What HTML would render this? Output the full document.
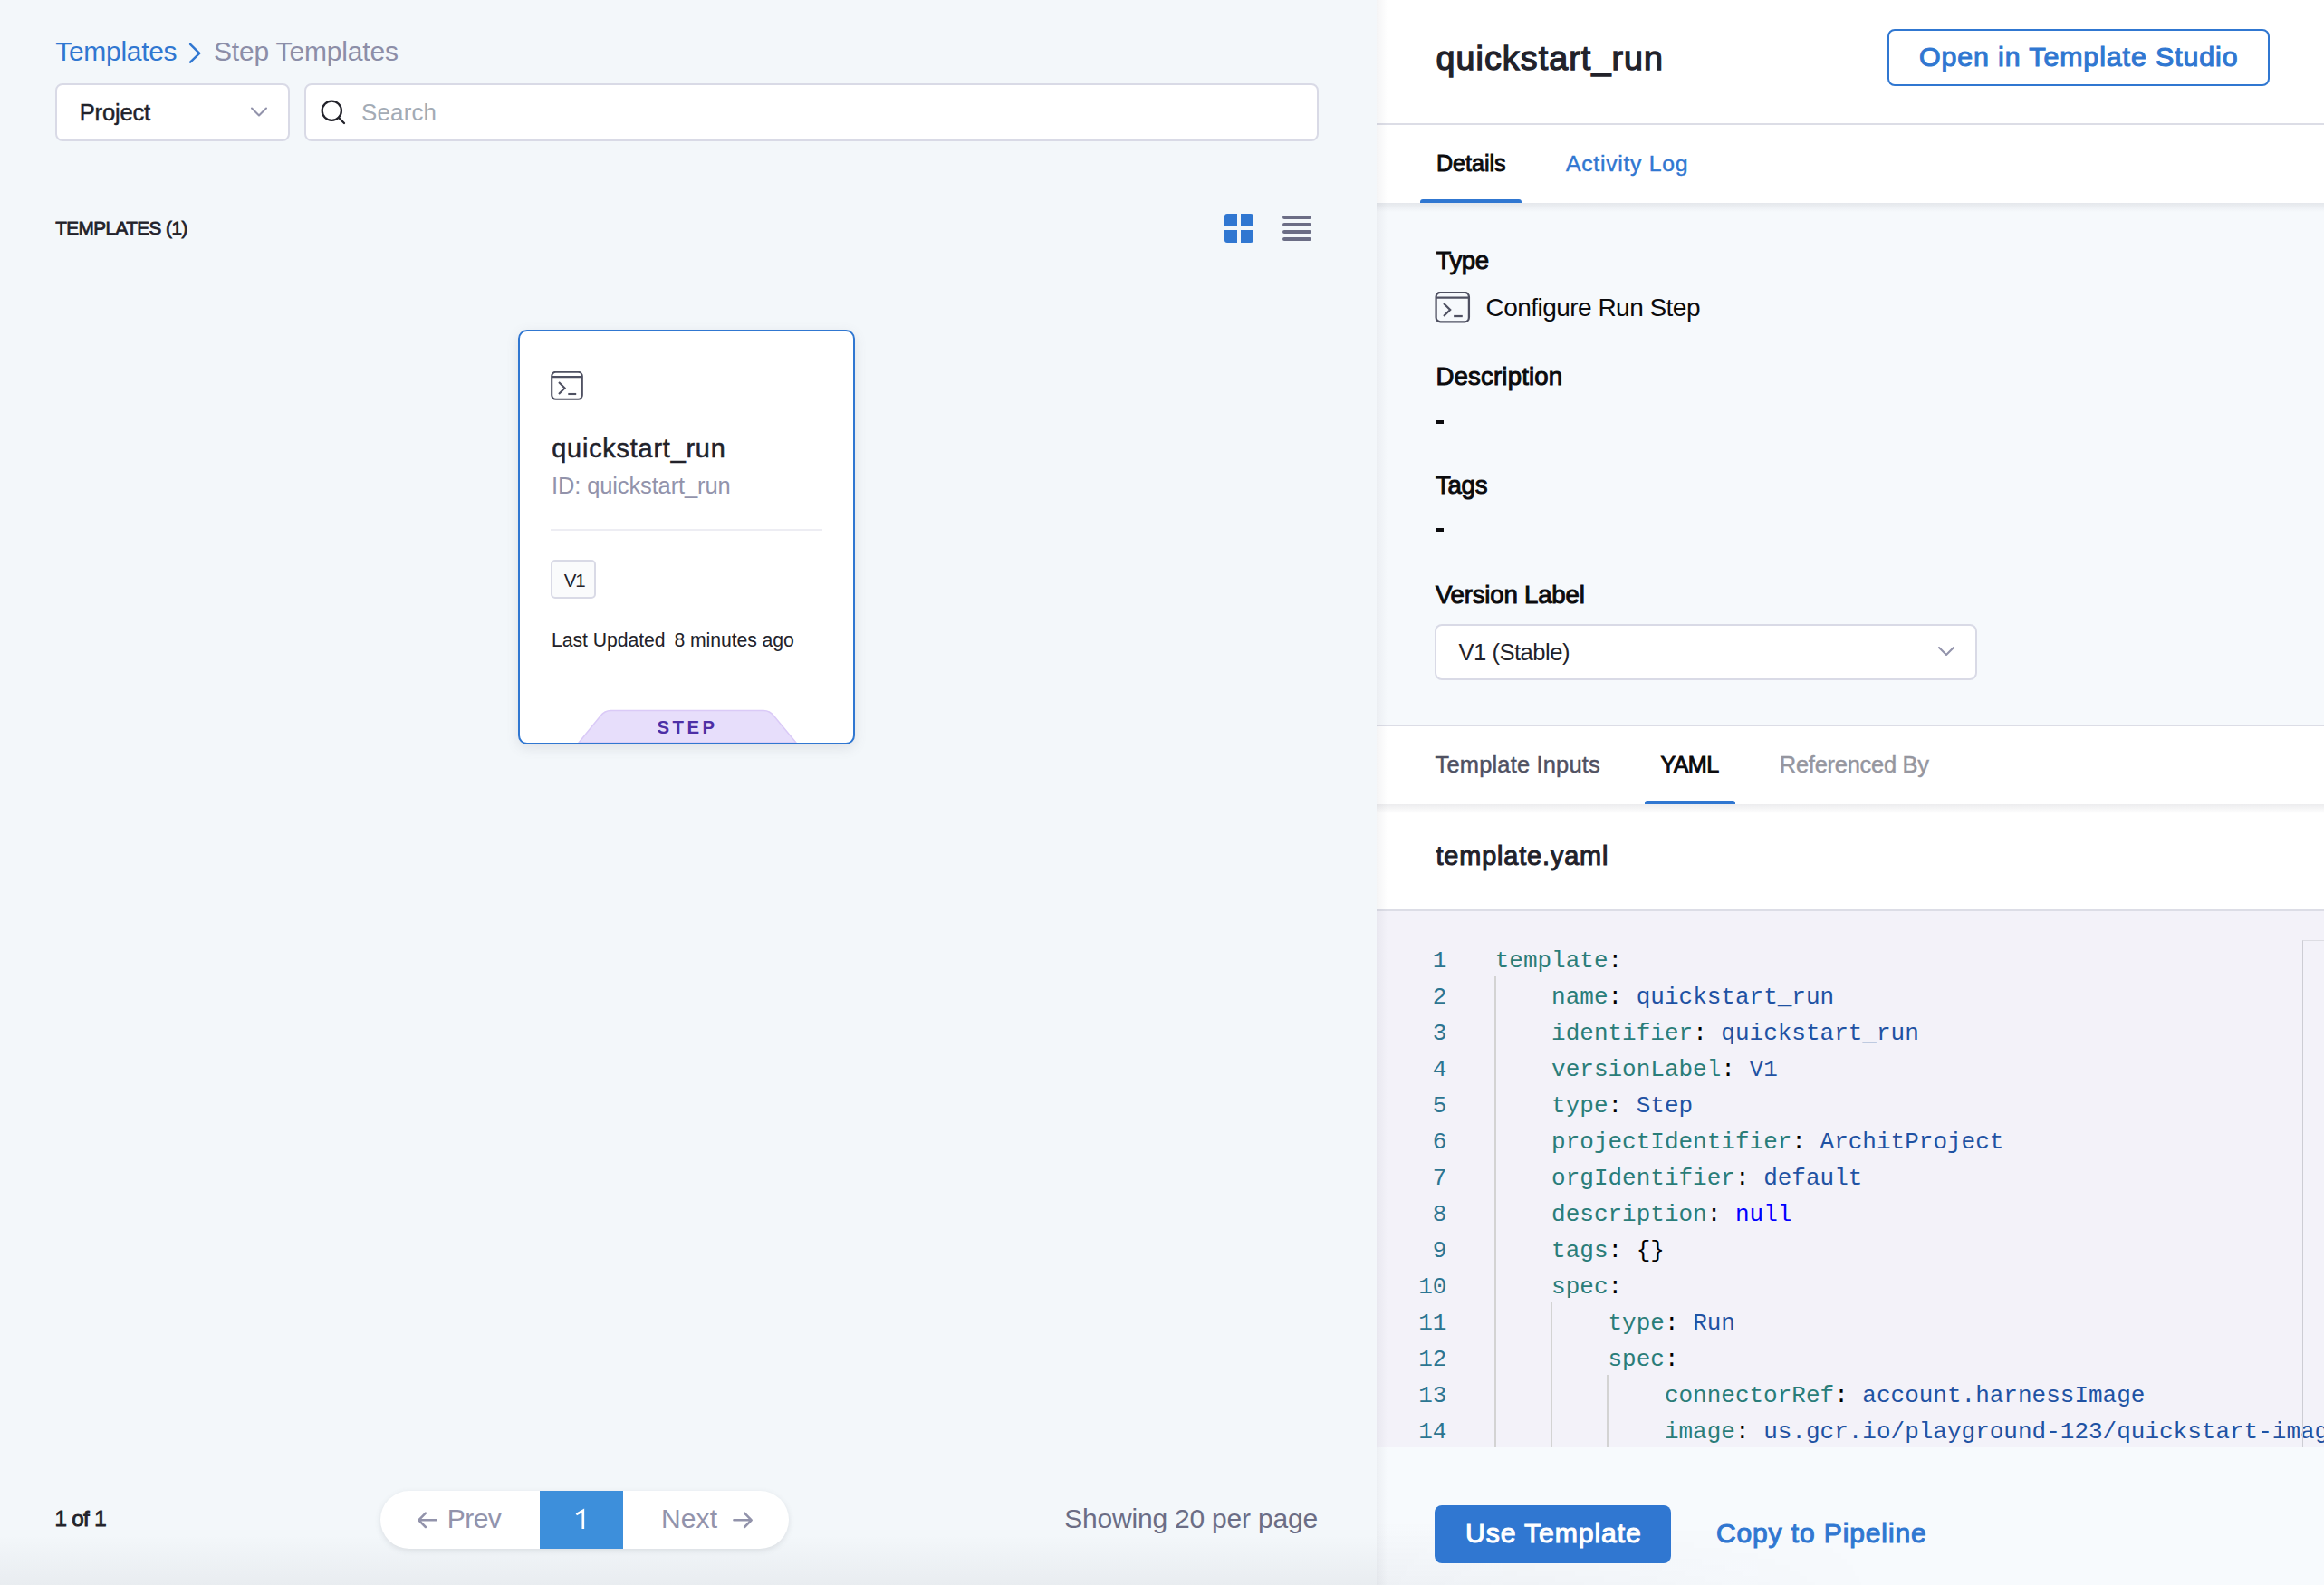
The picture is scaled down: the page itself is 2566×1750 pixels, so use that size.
<!DOCTYPE html>
<html><head><meta charset="utf-8"><style>
html,body{margin:0;padding:0;}
body{width:2566px;height:1750px;position:relative;overflow:hidden;background:#f3f7fa;font-family:"Liberation Sans",sans-serif;}
.a{position:absolute;}
.t{position:absolute;line-height:1;white-space:nowrap;}
.box{background:#fff;border:2px solid #d9dae6;border-radius:8px;box-sizing:border-box;}
.card{background:#fff;border:2px solid #3077d1;border-radius:10px;box-sizing:border-box;box-shadow:0 4px 14px rgba(96,97,112,0.14);}
.ln{position:absolute;left:0;width:77.4px;text-align:right;font-family:"Liberation Mono",monospace;font-size:26px;line-height:1;color:#2c7591;}
.cl{position:absolute;white-space:pre;font-family:"Liberation Mono",monospace;font-size:26px;line-height:1;}
.k{color:#2a7d79} .p{color:#000} .s{color:#1f52a3} .n{color:#0000ff} .b{color:#000}
</style></head><body>
<div class="a" style="left:0;top:1695px;width:1520px;height:55px;background:linear-gradient(rgba(40,41,61,0),rgba(40,41,61,0.05))"></div><div class="t" style="left:61.2px;top:42.3px;font-size:30.01px;color:#3077d1;letter-spacing:-0.29px;">Templates</div><svg class="a" style="left:205px;top:44px" width="22" height="30" viewBox="0 0 22 30"><path d="M5.1 4.9 L15.2 14.8 L5.1 24.6" fill="none" stroke="#3077d1" stroke-width="2.5" stroke-linecap="round" stroke-linejoin="round"/></svg><div class="t" style="left:236.0px;top:42.3px;font-size:30.01px;color:#8c8ea8;letter-spacing:-0.18px;">Step Templates</div><div class="a box" style="left:61px;top:92px;width:258.5px;height:64px;"></div><div class="t" style="left:87.7px;top:112.1px;font-size:25.58px;-webkit-text-stroke:0.46px #22222a;color:#22222a;letter-spacing:-0.18px;">Project</div><svg class="a" style="left:274px;top:114px" width="24" height="18" viewBox="0 0 24 18"><path d="M4 5.5 L12 13.5 L20 5.5" fill="none" stroke="#9293ab" stroke-width="2.1" stroke-linecap="round" stroke-linejoin="round"/></svg><div class="a box" style="left:336px;top:92px;width:1119.5px;height:64px;"></div><svg class="a" style="left:350px;top:106px" width="36" height="36" viewBox="0 0 36 36"><circle cx="16.3" cy="16.2" r="10.6" fill="none" stroke="#22222a" stroke-width="2.3"/><path d="M23.8 23.8 L30 30" stroke="#22222a" stroke-width="2.3" stroke-linecap="round"/></svg><div class="t" style="left:399.0px;top:111.5px;font-size:25.87px;color:#a3abb5;letter-spacing:0.21px;">Search</div><div class="t" style="left:61.2px;top:242.4px;font-size:20.71px;-webkit-text-stroke:0.77px #22222a;color:#22222a;letter-spacing:-0.54px;">TEMPLATES (1)</div><svg class="a" style="left:1352px;top:236px" width="32" height="32" viewBox="0 0 32 32" fill="#3077d1">
<path d="M3 0 H14 V14 H0 V3 A3 3 0 0 1 3 0Z"/><path d="M18 0 H29 A3 3 0 0 1 32 3 V14 H18Z"/>
<path d="M0 18 H14 V32 H3 A3 3 0 0 1 0 29Z"/><path d="M18 18 H32 V29 A3 3 0 0 1 29 32 H18Z"/></svg><svg class="a" style="left:1414px;top:234px" width="36" height="36" viewBox="0 0 36 36" stroke="#6b6d85" stroke-width="4" stroke-linecap="round">
<path d="M4 6 H32"/><path d="M4 14 H32"/><path d="M4 22 H32"/><path d="M4 30 H32"/></svg><div class="a card" style="left:572px;top:364px;width:372px;height:458px;"></div><svg class="a" style="left:608px;top:410px" width="36" height="32" viewBox="0 0 36 32"><rect x="1.2" y="0.8" width="33.6" height="30" rx="4.5" fill="none" stroke="#4f5162" stroke-width="2.1"/><path d="M1.5 6.1 H34.5" stroke="#4f5162" stroke-width="2.1"/><path d="M9 12 L15.6 18.5 L9 25" fill="none" stroke="#4f5162" stroke-width="2.1" stroke-linejoin="miter"/><path d="M19.3 25 H28.2" stroke="#4f5162" stroke-width="2.1"/></svg><div class="t" style="left:609.3px;top:481.3px;font-size:28.80px;-webkit-text-stroke:0.52px #22222a;color:#22222a;letter-spacing:0.81px;">quickstart_run</div><div class="t" style="left:609.0px;top:524.1px;font-size:25.50px;color:#9293ab;letter-spacing:-0.13px;">ID: quickstart_run</div><div class="a" style="left:608px;top:584px;width:300px;height:2px;background:#ededf3"></div><div class="a" style="left:608px;top:618px;width:50px;height:43px;border:2px solid #d9dae6;border-radius:5px;background:#fafbfc;box-sizing:border-box"></div><div class="t" style="left:622.8px;top:630.6px;font-size:20.50px;color:#22222a;letter-spacing:-1.30px;">V1</div><div class="t" style="left:609.0px;top:695.5px;font-size:21.22px;color:#22222a;letter-spacing:-0.05px;">Last Updated</div><div class="t" style="left:744.5px;top:695.5px;font-size:21.22px;color:#22222a;letter-spacing:-0.09px;">8 minutes ago</div><svg class="a" style="left:636px;top:782px" width="246" height="38" viewBox="0 0 246 38"><path d="M3 38 L27 8.5 Q31.5 2.6 38.5 2.6 H207 Q214 2.6 218.5 8.5 L243 38 Z" fill="#e7defb" stroke="#dacaf7" stroke-width="1.5"/></svg><div class="t" style="left:725.4px;top:792.6px;font-size:20.35px;font-weight:700;color:#4d2fa6;letter-spacing:3.50px;">STEP</div><div class="t" style="left:60.5px;top:1665.4px;font-size:24.10px;-webkit-text-stroke:0.93px #22222a;color:#22222a;letter-spacing:-0.64px;">1 of 1</div><div class="a" style="left:420px;top:1645.7px;width:451.4px;height:64px;border-radius:32px;background:#fff;box-shadow:0 2px 6px rgba(96,97,112,0.16);overflow:hidden"><div class="a" style="left:175.7px;top:0;width:92px;height:64px;background:#3d8fdb"></div></div><svg class="a" style="left:458px;top:1664px" width="28" height="28" viewBox="0 0 28 28"><path d="M23.6 14.3 H4.5 M11.9 6.6 L4.3 14.3 L11.9 22" fill="none" stroke="#9293ab" stroke-width="2.5" stroke-linecap="round" stroke-linejoin="round"/></svg><div class="t" style="left:493.8px;top:1662.3px;font-size:30.01px;color:#9293ab;letter-spacing:-0.57px;">Prev</div><svg class="a" style="left:630px;top:1664px" width="24" height="28" viewBox="0 0 24 28"><path d="M6.3 8.2 L13.8 3.8 V24" fill="none" stroke="#fff" stroke-width="2.7" stroke-linejoin="miter"/></svg><div class="t" style="left:730.0px;top:1662.3px;font-size:30.01px;color:#9293ab;letter-spacing:0.10px;">Next</div><svg class="a" style="left:806px;top:1664px" width="28" height="28" viewBox="0 0 28 28"><path d="M4.4 14.3 H23.5 M16.1 6.6 L23.7 14.3 L16.1 22" fill="none" stroke="#9293ab" stroke-width="2.5" stroke-linecap="round" stroke-linejoin="round"/></svg><div class="t" style="left:1175.3px;top:1662.3px;font-size:30.01px;color:#6b6d85;letter-spacing:-0.21px;">Showing 20 per page</div><div class="a" style="left:1520px;top:0;width:1046px;height:1750px;background:#fff"></div><div class="a" style="left:1520px;top:224px;width:1046px;height:577px;background:#f6f9fc"></div><div class="a" style="left:1520px;top:136px;width:1046px;height:2px;background:#dcdde6"></div><div class="t" style="left:1585.4px;top:45.8px;font-size:37.63px;-webkit-text-stroke:1.32px #22222a;color:#22222a;letter-spacing:1.10px;">quickstart_run</div><div class="a" style="left:2084px;top:32px;width:421.5px;height:63px;border:2px solid #3077d1;border-radius:8px;box-sizing:border-box"></div><div class="t" style="left:2118.9px;top:48.1px;font-size:30.37px;-webkit-text-stroke:1.08px #3077d1;color:#3077d1;letter-spacing:0.90px;">Open in Template Studio</div><div class="t" style="left:1585.9px;top:168.4px;font-size:25.15px;-webkit-text-stroke:0.91px #0b0b0d;color:#0b0b0d;letter-spacing:-0.01px;">Details</div><div class="t" style="left:1729.0px;top:169.2px;font-size:24.72px;-webkit-text-stroke:0.44px #3077d1;color:#3077d1;letter-spacing:0.74px;">Activity Log</div><div class="a" style="left:1567.8px;top:220px;width:112.2px;height:4px;background:#3077d1;border-radius:3px 3px 0 0"></div><div class="a" style="left:1520px;top:224px;width:1046px;height:10px;background:linear-gradient(rgba(40,41,61,0.085),rgba(40,41,61,0))"></div><div class="t" style="left:1585.5px;top:274.4px;font-size:27.62px;-webkit-text-stroke:0.99px #0b0b0d;color:#0b0b0d;letter-spacing:-0.42px;">Type</div><svg class="a" style="left:1584.3px;top:322.4px" width="39.5" height="34.6" viewBox="0 0 36 32"><rect x="1.2" y="0.8" width="33.6" height="30" rx="4.5" fill="none" stroke="#4f5162" stroke-width="2.1"/><path d="M1.5 6.1 H34.5" stroke="#4f5162" stroke-width="2.1"/><path d="M9 12 L15.6 18.5 L9 25" fill="none" stroke="#4f5162" stroke-width="2.1" stroke-linejoin="miter"/><path d="M19.3 25 H28.2" stroke="#4f5162" stroke-width="2.1"/></svg><div class="t" style="left:1640.5px;top:326.0px;font-size:28.05px;color:#0b0b0d;letter-spacing:-0.55px;">Configure Run Step</div><div class="t" style="left:1585.5px;top:402.3px;font-size:27.62px;-webkit-text-stroke:0.99px #0b0b0d;color:#0b0b0d;letter-spacing:0.15px;">Description</div><div class="a" style="left:1585.8px;top:463.7px;width:8.4px;height:4px;background:#0b0b0d"></div><div class="t" style="left:1584.9px;top:522.2px;font-size:27.62px;-webkit-text-stroke:0.99px #0b0b0d;color:#0b0b0d;letter-spacing:-0.24px;">Tags</div><div class="a" style="left:1585.8px;top:583.2px;width:8.4px;height:4px;background:#0b0b0d"></div><div class="t" style="left:1584.9px;top:642.7px;font-size:27.62px;-webkit-text-stroke:0.99px #0b0b0d;color:#0b0b0d;letter-spacing:-0.20px;">Version Label</div><div class="a box" style="left:1584.4px;top:689px;width:598.6px;height:62px;"></div><div class="t" style="left:1610.5px;top:708.0px;font-size:25.58px;color:#22222a;letter-spacing:-0.50px;">V1 (Stable)</div><svg class="a" style="left:2137px;top:710px" width="24" height="18" viewBox="0 0 24 18"><path d="M4 5 L12 13 L20 5" fill="none" stroke="#9293ab" stroke-width="2.1" stroke-linecap="round" stroke-linejoin="round"/></svg><div class="a" style="left:1520px;top:800px;width:1046px;height:2px;background:#dcdde6"></div><div class="t" style="left:1584.6px;top:832.2px;font-size:25.44px;-webkit-text-stroke:0.46px #4f5162;color:#4f5162;letter-spacing:0.18px;">Template Inputs</div><div class="t" style="left:1833.5px;top:832.4px;font-size:25.14px;-webkit-text-stroke:0.92px #0b0b0d;color:#0b0b0d;letter-spacing:-0.64px;">YAML</div><div class="t" style="left:1964.8px;top:832.2px;font-size:25.44px;-webkit-text-stroke:0.46px #95969f;color:#95969f;letter-spacing:-0.25px;">Referenced By</div><div class="a" style="left:1815.8px;top:884px;width:100.2px;height:4px;background:#3077d1;border-radius:3px 3px 0 0"></div><div class="a" style="left:1520px;top:888px;width:1046px;height:10px;background:linear-gradient(rgba(40,41,61,0.085),rgba(40,41,61,0))"></div><div class="t" style="left:1585.5px;top:931.3px;font-size:28.85px;-webkit-text-stroke:1.04px #22222a;color:#22222a;letter-spacing:0.86px;">template.yaml</div><div class="a" style="left:1520px;top:1004px;width:1046px;height:2px;background:#dcdde6"></div><div class="a" style="left:1520px;top:1006px;width:1046px;height:591.7px;background:#f3f2f9;overflow:hidden"><div class="ln" style="top:41.7px">1</div><div class="cl" style="top:41.7px;left:130.7px"><span class="k">template</span><span class="p">:</span></div><div class="ln" style="top:81.7px">2</div><div class="cl" style="top:81.7px;left:193.1px"><span class="k">name</span><span class="p">: </span><span class="s">quickstart_run</span></div><div class="ln" style="top:121.7px">3</div><div class="cl" style="top:121.7px;left:193.1px"><span class="k">identifier</span><span class="p">: </span><span class="s">quickstart_run</span></div><div class="ln" style="top:161.7px">4</div><div class="cl" style="top:161.7px;left:193.1px"><span class="k">versionLabel</span><span class="p">: </span><span class="s">V1</span></div><div class="ln" style="top:201.7px">5</div><div class="cl" style="top:201.7px;left:193.1px"><span class="k">type</span><span class="p">: </span><span class="s">Step</span></div><div class="ln" style="top:241.7px">6</div><div class="cl" style="top:241.7px;left:193.1px"><span class="k">projectIdentifier</span><span class="p">: </span><span class="s">ArchitProject</span></div><div class="ln" style="top:281.7px">7</div><div class="cl" style="top:281.7px;left:193.1px"><span class="k">orgIdentifier</span><span class="p">: </span><span class="s">default</span></div><div class="ln" style="top:321.7px">8</div><div class="cl" style="top:321.7px;left:193.1px"><span class="k">description</span><span class="p">: </span><span class="n">null</span></div><div class="ln" style="top:361.7px">9</div><div class="cl" style="top:361.7px;left:193.1px"><span class="k">tags</span><span class="p">: </span><span class="b">{}</span></div><div class="ln" style="top:401.7px">10</div><div class="cl" style="top:401.7px;left:193.1px"><span class="k">spec</span><span class="p">:</span></div><div class="ln" style="top:441.7px">11</div><div class="cl" style="top:441.7px;left:255.5px"><span class="k">type</span><span class="p">: </span><span class="s">Run</span></div><div class="ln" style="top:481.7px">12</div><div class="cl" style="top:481.7px;left:255.5px"><span class="k">spec</span><span class="p">:</span></div><div class="ln" style="top:521.7px">13</div><div class="cl" style="top:521.7px;left:317.9px"><span class="k">connectorRef</span><span class="p">: </span><span class="s">account.harnessImage</span></div><div class="ln" style="top:561.7px">14</div><div class="cl" style="top:561.7px;left:317.9px"><span class="k">image</span><span class="p">: </span><span class="s">us.gcr.io/playground-123/quickstart-image</span></div><div class="a" style="left:129.8px;top:72px;width:2px;height:600px;background:#d3d3d3"></div><div class="a" style="left:191.8px;top:432px;width:2px;height:300px;background:#d3d3d3"></div><div class="a" style="left:254.4px;top:512px;width:2px;height:300px;background:#d3d3d3"></div><div class="a" style="left:1022px;top:32px;width:40px;height:600px;border-left:1.5px solid #cdcdd4;border-top:1px solid #dddde3;box-sizing:border-box"></div></div><div class="a" style="left:1520px;top:1597.7px;width:1046px;height:152.3px;background:#f7fafd"></div><div class="a" style="left:1520px;top:1680px;width:560px;height:70px;background:linear-gradient(rgba(40,41,61,0),rgba(40,41,61,0.045));-webkit-mask-image:linear-gradient(90deg,#000 0%,rgba(0,0,0,0.6) 40%,transparent 100%)"></div><div class="a" style="left:1584.4px;top:1662px;width:261px;height:63.5px;background:#3077d1;border-radius:8px"></div><div class="t" style="left:1618.0px;top:1678.1px;font-size:30.20px;-webkit-text-stroke:1.07px #fff;color:#fff;letter-spacing:0.89px;">Use Template</div><div class="t" style="left:1894.9px;top:1678.3px;font-size:30.01px;-webkit-text-stroke:1.07px #3077d1;color:#3077d1;letter-spacing:0.89px;">Copy to Pipeline</div><div class="a" style="left:1520px;top:0;width:12px;height:1750px;background:linear-gradient(90deg,rgba(40,41,61,0.05),rgba(40,41,61,0))"></div>
</body></html>
